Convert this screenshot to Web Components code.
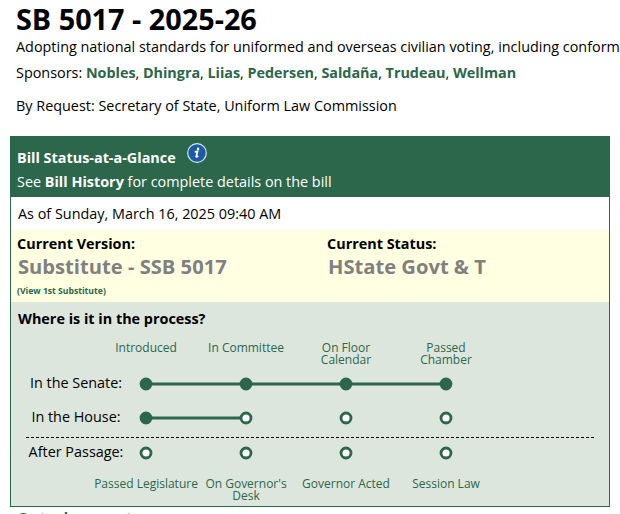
<!DOCTYPE html>
<html lang="en">
<head>
<meta charset="utf-8">
<title>SB 5017 - 2025-26</title>
<style>
    body {
        margin: 0;
        height: 514px;
        overflow: hidden;
        background: #fff;
        color: #000;
        font: 14.4px/20px "Open Sans", sans-serif;
        --green: #2c664b;
    }
</style>
</head>
<body>
<bill-heading>
    <span slot="title">SB 5017 - 2025-26</span>
    <span slot="description">Adopting national standards for uniformed and overseas civilian voting, including conform</span>
    <sponsor-list slot="sponsors" names="Nobles,Dhingra,Liias,Pedersen,Saldaña,Trudeau,Wellman"></sponsor-list>
    <span slot="request">By Request: Secretary of State, Uniform Law Commission</span>
</bill-heading>
<bill-status>
    <span slot="date">As of Sunday, March 16, 2025 09:40 AM</span>
    <status-item slot="current" label="Current Version:" value="Substitute - SSB 5017" note="(View 1st Substitute)"></status-item>
    <status-item slot="current" label="Current Status:" value="HState Govt &amp; T"></status-item>
    <step-labels slot="process" class="top" labels="Introduced|In Committee|On Floor Calendar|Passed Chamber"></step-labels>
    <progress-row slot="process" label="In the Senate:" reached="4" line="3"></progress-row>
    <progress-row slot="process" label="In the House:" reached="1" line="1"></progress-row>
    <dashed-rule slot="process"></dashed-rule>
    <progress-row slot="process" class="after" label="After Passage:" reached="0" line="0"></progress-row>
    <step-labels slot="process" class="bottom" labels="Passed Legislature|On Governor's Desk|Governor Acted|Session Law"></step-labels>
</bill-status>
<document-link>Go to documents</document-link>

<script>
class BillHeading extends HTMLElement {
    constructor() {
        super();
        this.attachShadow({ mode: "open" });
        this.shadowRoot.innerHTML = `
            <style>
                :host {
                    display: block;
                    height: 136px;
                    padding: 2px 0 0 16px;
                    box-sizing: border-box;
                    white-space: nowrap;
                }

                h1 {
                    margin: 0;
                    padding-bottom: 2px;
                    font-size: 28.8px;
                    line-height: 33px;
                }

                .sponsors {
                    margin-top: 6px;
                }

                .request {
                    margin-top: 13px;
                }
            </style>
            <h1><slot name="title"></slot></h1>
            <div class="description"><slot name="description"></slot></div>
            <div class="sponsors">Sponsors: <slot name="sponsors"></slot></div>
            <div class="request"><slot name="request"></slot></div>
        `;
    }
}

class SponsorList extends HTMLElement {
    constructor() {
        super();
        this.attachShadow({ mode: "open" });
    }

    connectedCallback() {
        const names = this.getAttribute("names").split(",");
        this.shadowRoot.innerHTML = `
            <style>
                :host {
                    display: inline;
                    letter-spacing: -0.03px;
                }

                b {
                    color: var(--green);
                }
            </style>
            ${names.map(name => `<b>${name}</b>`).join(", ")}
        `;
    }
}

class InfoIcon extends HTMLElement {
    constructor() {
        super();
        this.attachShadow({ mode: "open" });
        this.shadowRoot.innerHTML = `
            <style>
                :host {
                    display: block;
                    width: 20px;
                    height: 20px;
                }

                svg {
                    display: block;
                }
            </style>
            <svg width="20" height="20" viewBox="0 0 20 20">
                <circle cx="10" cy="10" r="9.3" fill="#1c5aa6" stroke="#d5e6ee" stroke-width="1.2"/>
                <circle cx="11.1" cy="5.9" r="1.3" fill="#fff"/>
                <path d="M7.8 8.8 L10.5 8.4 L9.2 13.7 Q9.4 14.2 11.2 12.9" fill="none" stroke="#fff" stroke-width="1.8"/>
            </svg>
        `;
    }
}

class BillStatus extends HTMLElement {
    constructor() {
        super();
        this.attachShadow({ mode: "open" });
        this.shadowRoot.innerHTML = `
            <style>
                :host {
                    display: block;
                    width: 600px;
                    height: 371px;
                    margin-left: 10px;
                    box-sizing: border-box;
                    border: 1px solid var(--green);
                }

                header {
                    height: 60px;
                    padding: 6px 6px 0;
                    box-sizing: border-box;
                    background: var(--green);
                    color: #fff;
                }

                .heading {
                    display: flex;
                    gap: 11px;
                    height: 29px;
                    font-weight: bold;
                }

                .heading span {
                    padding-top: 5px;
                }

                .date {
                    height: 33px;
                    padding: 7px 7px 0;
                    box-sizing: border-box;
                }

                .current {
                    display: grid;
                    grid-template-columns: 310px 1fr;
                    height: 72px;
                    padding: 4px 6px 0;
                    box-sizing: border-box;
                    background: #ffffe1;
                }

                .process {
                    height: 204px;
                    padding-top: 7px;
                    box-sizing: border-box;
                    background: #dde6dd;
                }

                h2 {
                    margin: 0 0 0 7px;
                    font-size: 14.4px;
                    line-height: 20px;
                }
            </style>
            <header>
                <div class="heading"><span>Bill Status-at-a-Glance</span><info-icon></info-icon></div>
                <div>See <b>Bill History</b> for complete details on the bill</div>
            </header>
            <div class="date"><slot name="date"></slot></div>
            <div class="current"><slot name="current"></slot></div>
            <div class="process">
                <h2>Where is it in the process?</h2>
                <slot name="process"></slot>
            </div>
        `;
    }
}

class StatusItem extends HTMLElement {
    constructor() {
        super();
        this.attachShadow({ mode: "open" });
        this.shadowRoot.innerHTML = `
            <style>
                :host {
                    display: block;
                    font-weight: bold;
                }

                .value {
                    padding: 0 0 1px 1px;
                    color: #808080;
                    font-size: 20.16px;
                    line-height: 25px;
                }

                .note {
                    padding-top: 5px;
                    color: var(--green);
                    font-size: 8.64px;
                    line-height: 12px;
                }
            </style>
            <div class="label"></div>
            <div class="value"></div>
            <div class="note"></div>
        `;
    }

    connectedCallback() {
        ["label", "value", "note"].forEach(name => {
            this.shadowRoot.querySelector("." + name).textContent = this.getAttribute(name) || "";
        });
    }
}

class StepLabels extends HTMLElement {
    constructor() {
        super();
        this.attachShadow({ mode: "open" });
    }

    connectedCallback() {
        const labels = this.getAttribute("labels").split("|");
        this.shadowRoot.innerHTML = `
            <style>
                :host {
                    display: grid;
                    grid-template-columns: repeat(4, 100px);
                    margin-left: 85px;
                    color: var(--green);
                    font-size: 12px;
                    line-height: 12px;
                    text-align: center;
                }

                :host(.top) {
                    height: 38px;
                    padding-top: 13px;
                    box-sizing: border-box;
                }

                :host(.bottom) {
                    padding-top: 11px;
                }

                span {
                    justify-self: center;
                    width: 90px;
                }

                span.wide {
                    width: auto;
                    white-space: nowrap;
                }
            </style>
            ${labels.map(label => `<span class="${label === "Passed Legislature" ? "wide" : ""}">${label}</span>`).join("")}
        `;
        this.shadowRoot.querySelectorAll("span").forEach(span => {
            // only these labels break after the first words
            if (/^(On Floor|Passed) (Calendar|Chamber)$/.test(span.textContent)) {
                span.style.width = "60px";
            }
        });
    }
}

class ProgressRow extends HTMLElement {
    constructor() {
        super();
        this.attachShadow({ mode: "open" });
    }

    connectedCallback() {
        const reached = +this.getAttribute("reached");
        const line = +this.getAttribute("line");
        let circles = "";
        for (let i = 0; i < 4; i++) {
            const fill = i < reached ? "var(--green)" : "#fff";
            circles += `<circle cx="${10 + i * 100}" cy="10" r="5" fill="${fill}"/>`;
        }

        this.shadowRoot.innerHTML = `
            <style>
                :host {
                    display: grid;
                    grid-template-columns: 130px 320px;
                    align-items: center;
                    height: 34px;
                    text-align: center;
                }

                :host(.after) {
                    height: 29px;
                }

                span {
                    padding-bottom: 2px;
                }

                svg {
                    display: block;
                    margin-left: -5px;
                    stroke: var(--green);
                    stroke-width: 2.8;
                }
            </style>
            <span>${this.getAttribute("label")}</span>
            <svg width="320" height="20">
                <path d="M10 10 H${10 + line * 100}"/>
                ${circles}
            </svg>
        `;
    }
}

class DashedRule extends HTMLElement {
    constructor() {
        super();
        this.attachShadow({ mode: "open" });
        this.shadowRoot.innerHTML = `
            <style>
                :host {
                    display: block;
                    width: 568px;
                    margin: 2px 0 0 15px;
                    border-top: 1px dashed #000;
                }
            </style>
        `;
    }
}

class DocumentLink extends HTMLElement {
    constructor() {
        super();
        this.attachShadow({ mode: "open" });
        this.shadowRoot.innerHTML = `
            <style>
                :host {
                    display: block;
                    padding: 1px 0 0 17px;
                    color: var(--green);
                    font-weight: bold;
                }
            </style>
            <slot></slot>
        `;
    }
}

window.customElements.define("bill-heading", BillHeading);
window.customElements.define("sponsor-list", SponsorList);
window.customElements.define("info-icon", InfoIcon);
window.customElements.define("bill-status", BillStatus);
window.customElements.define("status-item", StatusItem);
window.customElements.define("step-labels", StepLabels);
window.customElements.define("progress-row", ProgressRow);
window.customElements.define("dashed-rule", DashedRule);
window.customElements.define("document-link", DocumentLink);
</script>
</body>
</html>
